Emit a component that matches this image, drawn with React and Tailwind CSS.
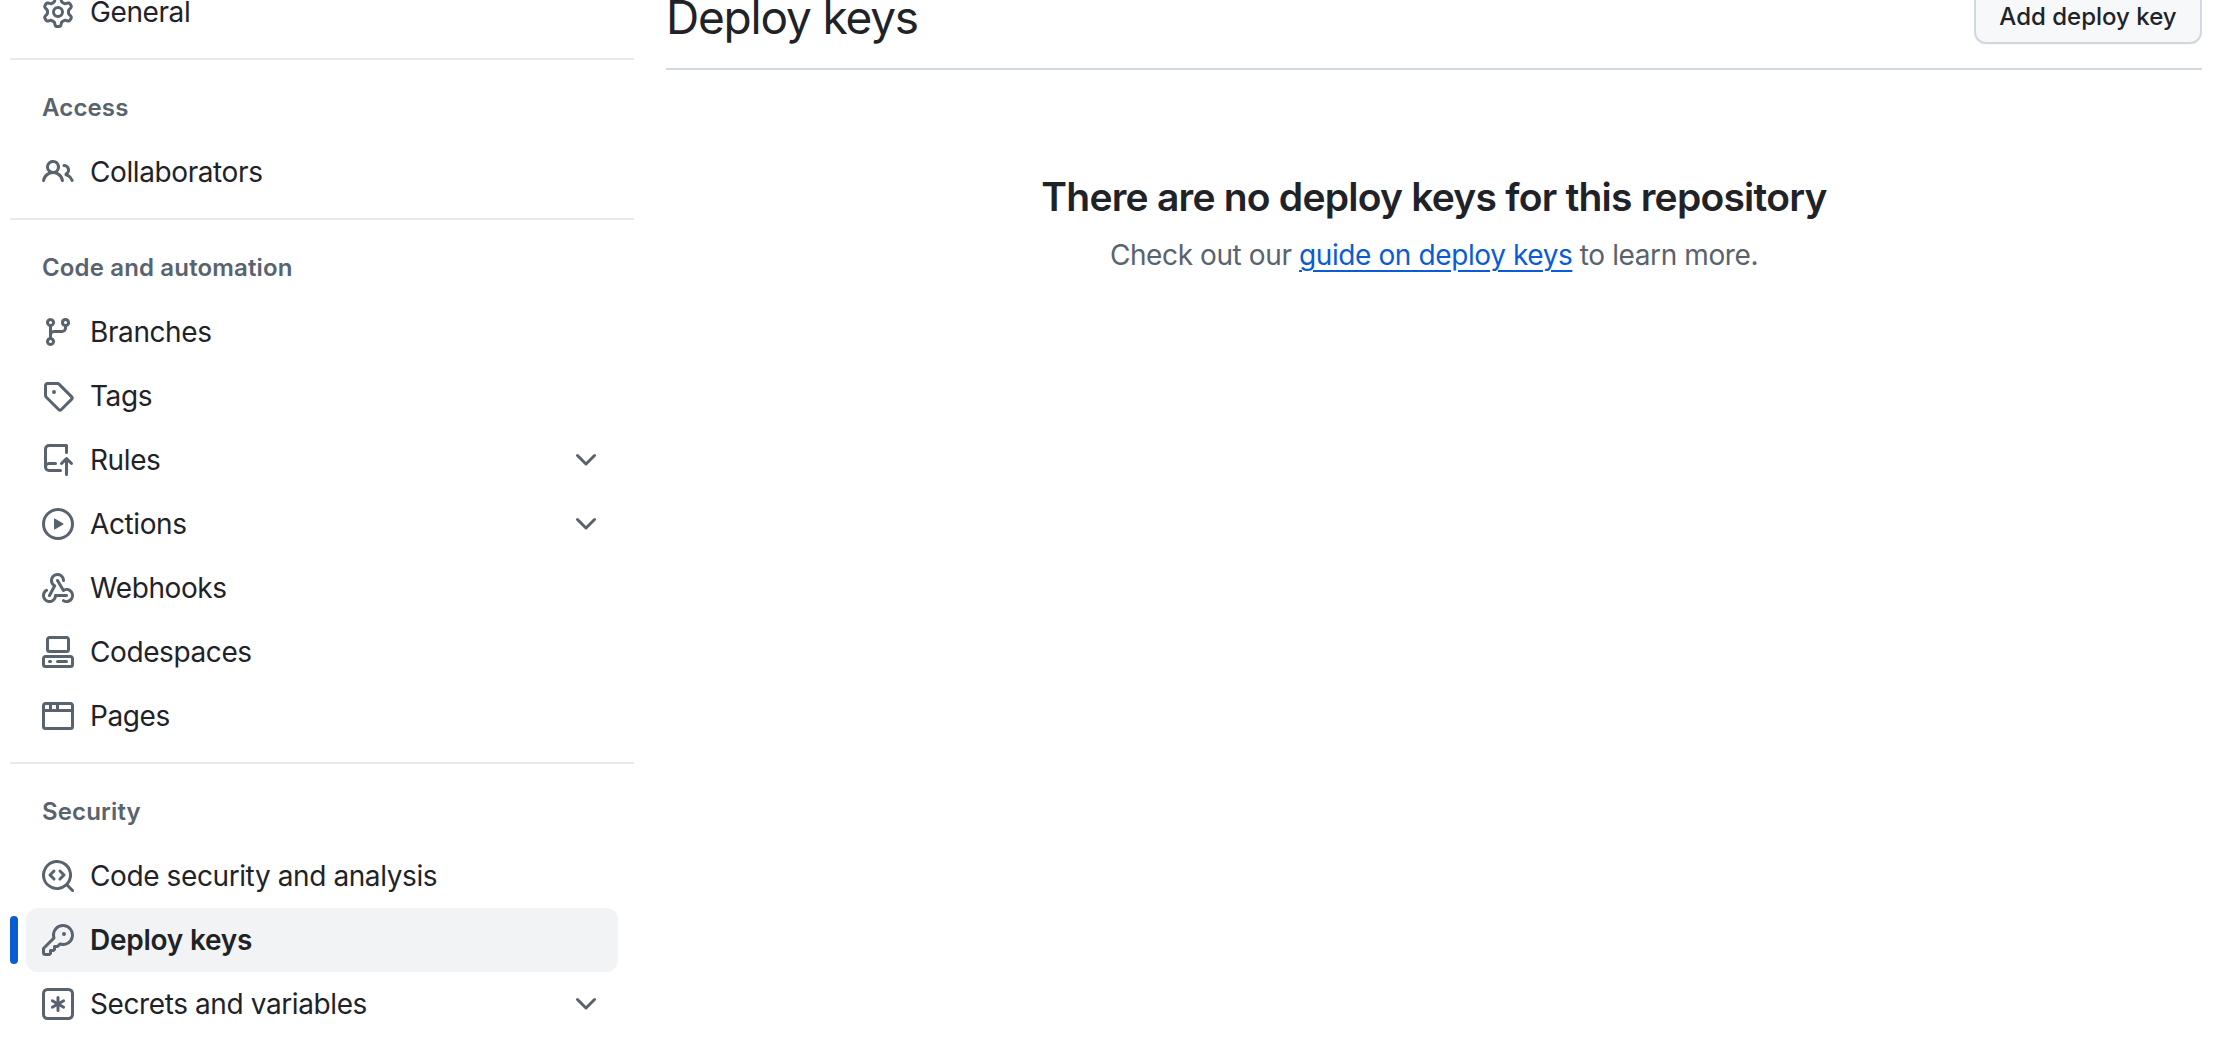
const P = {
  gear: ["M8 0a8.2 8.2 0 0 1 .701.031C9.444.095 9.99.645 10.16 1.29l.288 1.107c.018.066.079.158.212.224.231.114.454.243.668.386.123.082.233.09.299.071l1.103-.303c.644-.176 1.392.021 1.82.63.27.385.506.792.704 1.218.315.675.111 1.422-.364 1.891l-.814.806c-.049.048-.098.147-.088.294.016.257.016.515 0 .772-.01.147.038.246.088.294l.814.806c.475.469.679 1.216.364 1.891a7.977 7.977 0 0 1-.704 1.217c-.428.61-1.176.807-1.82.63l-1.102-.302c-.067-.019-.177-.011-.3.071a5.909 5.909 0 0 1-.668.386c-.133.066-.194.158-.211.224l-.29 1.106c-.168.646-.715 1.196-1.458 1.26a8.006 8.006 0 0 1-1.402 0c-.743-.064-1.289-.614-1.458-1.26l-.289-1.106c-.018-.066-.079-.158-.212-.224a5.738 5.738 0 0 1-.668-.386c-.123-.082-.233-.09-.299-.071l-1.103.303c-.644.176-1.392-.021-1.82-.63a8.12 8.12 0 0 1-.704-1.218c-.315-.675-.111-1.422.363-1.891l.815-.806c.05-.048.098-.147.088-.294a6.214 6.214 0 0 1 0-.772c.01-.147-.038-.246-.088-.294l-.815-.806C.635 6.045.431 5.298.746 4.623a7.92 7.92 0 0 1 .704-1.217c.428-.61 1.176-.807 1.82-.63l1.102.302c.067.019.177.011.3-.071.214-.143.437-.272.668-.386.133-.066.194-.158.211-.224l.29-1.106C6.009.645 6.556.095 7.299.03 7.53.01 7.764 0 8 0Zm-.571 1.525c-.036.003-.108.036-.137.146l-.289 1.105c-.147.561-.549.967-.998 1.189-.173.086-.34.183-.5.29-.417.278-.97.423-1.529.27l-1.103-.303c-.109-.03-.175.016-.195.045-.22.312-.412.644-.573.99-.014.031-.021.11.059.19l.815.806c.411.406.562.957.53 1.456a4.709 4.709 0 0 0 0 .582c.032.499-.119 1.05-.53 1.456l-.815.806c-.081.08-.073.159-.059.19.162.346.353.677.573.989.02.03.085.076.195.046l1.102-.303c.56-.153 1.113-.008 1.53.27.161.107.328.204.501.29.447.222.85.629.997 1.189l.289 1.105c.029.109.101.143.137.146a6.6 6.6 0 0 0 1.142 0c.036-.003.108-.036.137-.146l.289-1.105c.147-.561.549-.967.998-1.189.173-.086.34-.183.5-.29.417-.278.97-.423 1.529-.27l1.103.303c.109.029.175-.016.195-.045.22-.313.411-.644.573-.99.014-.031.021-.11-.059-.19l-.815-.806c-.411-.406-.562-.957-.53-1.456a4.709 4.709 0 0 0 0-.582c-.032-.499.119-1.05.53-1.456l.815-.806c.081-.08.073-.159.059-.19a6.464 6.464 0 0 0-.573-.989c-.02-.03-.085-.076-.195-.046l-1.102.303c-.56.153-1.113.008-1.53-.27a4.44 4.44 0 0 0-.501-.29c-.447-.222-.85-.629-.997-1.189l-.289-1.105c-.029-.11-.101-.143-.137-.146a6.6 6.6 0 0 0-1.142 0ZM11 8a3 3 0 1 1-6 0 3 3 0 0 1 6 0ZM9.5 8a1.5 1.5 0 1 0-3.001.001A1.5 1.5 0 0 0 9.5 8Z"],
  people: ["M2 5.5a3.5 3.5 0 1 1 5.898 2.549 5.508 5.508 0 0 1 3.034 4.084.75.75 0 1 1-1.482.235 4 4 0 0 0-7.9 0 .75.75 0 0 1-1.482-.236A5.507 5.507 0 0 1 3.102 8.05 3.493 3.493 0 0 1 2 5.5ZM11 4a3.001 3.001 0 0 1 2.22 5.018 5.01 5.01 0 0 1 2.56 3.012.749.749 0 0 1-.885.954.752.752 0 0 1-.549-.514 3.507 3.507 0 0 0-2.522-2.372.75.75 0 0 1-.574-.73v-.352a.75.75 0 0 1 .416-.672A1.5 1.5 0 0 0 11 5.5.75.75 0 0 1 11 4Zm-5.5-.5a2 2 0 1 0-.001 3.999A2 2 0 0 0 5.5 3.5Z"],
  branch: ["M9.5 3.25a2.25 2.25 0 1 1 3 2.122V6A2.5 2.5 0 0 1 10 8.5H6a1 1 0 0 0-1 1v1.128a2.251 2.251 0 1 1-1.5 0V5.372a2.25 2.25 0 1 1 1.5 0v1.836A2.493 2.493 0 0 1 6 7h4a1 1 0 0 0 1-1v-.628A2.25 2.25 0 0 1 9.5 3.25Zm-6 0a.75.75 0 1 0 1.5 0 .75.75 0 0 0-1.5 0Zm8.25-.75a.75.75 0 1 0 0 1.5.75.75 0 0 0 0-1.5ZM4.25 12a.75.75 0 1 0 0 1.5.75.75 0 0 0 0-1.5Z"],
  tag: ["M1 7.775V2.75C1 1.784 1.784 1 2.75 1h5.025c.464 0 .91.184 1.238.513l6.25 6.25a1.75 1.75 0 0 1 0 2.474l-5.026 5.026a1.75 1.75 0 0 1-2.474 0l-6.25-6.25A1.75 1.75 0 0 1 1 7.775Zm1.5 0c0 .066.026.13.073.177l6.25 6.25a.25.25 0 0 0 .354 0l5.025-5.025a.25.25 0 0 0 0-.354l-6.25-6.25a.25.25 0 0 0-.177-.073H2.75a.25.25 0 0 0-.25.25ZM6 5a1 1 0 1 1 0 2 1 1 0 0 1 0-2Z"],
  push: ["M1 2.5A2.5 2.5 0 0 1 3.5 0h8.75a.75.75 0 0 1 .75.75v3.5a.75.75 0 0 1-1.5 0V1.5h-8a1 1 0 0 0-1 1v6.708A2.492 2.492 0 0 1 3.5 9h3.25a.75.75 0 0 1 0 1.5H3.5a1 1 0 0 0 0 2h5.75a.75.75 0 0 1 0 1.5H3.5A2.5 2.5 0 0 1 1 11.5Zm13.23 7.79h-.001l-1.224-1.224v6.184a.75.75 0 0 1-1.5 0V9.066L10.28 10.29a.75.75 0 0 1-1.06-1.061l2.505-2.504a.75.75 0 0 1 1.06 0L15.29 9.23a.751.751 0 0 1-.018 1.042.751.751 0 0 1-1.042.018Z"],
  play: ["M8 0a8 8 0 1 1 0 16A8 8 0 0 1 8 0ZM1.5 8a6.5 6.5 0 1 0 13 0 6.5 6.5 0 0 0-13 0Zm4.879-2.773 4.264 2.559a.25.25 0 0 1 0 .428l-4.264 2.559A.25.25 0 0 1 6 10.559V5.442a.25.25 0 0 1 .379-.215Z"],
  webhook: ["M5.5 4.25a2.25 2.25 0 0 1 4.5 0 .75.75 0 0 0 1.5 0 3.75 3.75 0 1 0-6.14 2.889l-2.272 4.258a.75.75 0 0 0 1.324.706L7 7.25a.75.75 0 0 0-.309-1.015A2.25 2.25 0 0 1 5.5 4.25Z", "M7.364 3.607a.75.75 0 0 1 1.03.257l2.608 4.349a3.75 3.75 0 1 1-.628 6.785.75.75 0 0 1 .752-1.299 2.25 2.25 0 1 0-.033-3.88.75.75 0 0 1-1.03-.256L7.107 4.636a.75.75 0 0 1 .257-1.03Z", "M2.9 8.776A.75.75 0 0 1 2.625 9.8 2.25 2.25 0 1 0 6 11.75a.75.75 0 0 1 .75-.751h5.5a.75.75 0 0 1 0 1.5H7.425a3.751 3.751 0 1 1-5.55-3.998.75.75 0 0 1 1.024.274Z"],
  codespaces: ["M0 11.25c0-.966.784-1.75 1.75-1.75h12.5c.966 0 1.75.784 1.75 1.75v3A1.75 1.75 0 0 1 14.25 16H1.75A1.75 1.75 0 0 1 0 14.25Zm2-9.5C2 .784 2.784 0 3.75 0h8.5C13.216 0 14 .784 14 1.75v5a1.75 1.75 0 0 1-1.75 1.75h-8.5A1.75 1.75 0 0 1 2 6.75Zm1.75-.25a.25.25 0 0 0-.25.25v5c0 .138.112.25.25.25h8.5a.25.25 0 0 0 .25-.25v-5a.25.25 0 0 0-.25-.25Zm-2 9.5a.25.25 0 0 0-.25.25v3c0 .138.112.25.25.25h12.5a.25.25 0 0 0 .25-.25v-3a.25.25 0 0 0-.25-.25Z", "M7 12.75a.75.75 0 0 1 .75-.75h4.5a.75.75 0 0 1 0 1.5h-4.5a.75.75 0 0 1-.75-.75Zm-4 0a.75.75 0 0 1 .75-.75h.5a.75.75 0 0 1 0 1.5h-.5a.75.75 0 0 1-.75-.75Z"],
  browser: ["M0 2.75C0 1.784.784 1 1.75 1h12.5c.966 0 1.75.784 1.75 1.75v10.5A1.75 1.75 0 0 1 14.25 15H1.75A1.75 1.75 0 0 1 0 13.25ZM14.5 6h-13v7.25c0 .138.112.25.25.25h12.5a.25.25 0 0 0 .25-.25Zm-6-3.5v2h6v-1.75a.25.25 0 0 0-.25-.25ZM5 2.5v2h2v-2Zm-3.25 0a.25.25 0 0 0-.25.25V4.5h2v-2Z"],
  codescan: ["M8.47 4.97a.75.75 0 0 0 0 1.06L9.94 7.5 8.47 8.97a.75.75 0 1 0 1.06 1.06l2-2a.75.75 0 0 0 0-1.06l-2-2a.75.75 0 0 0-1.06 0ZM6.53 6.03a.75.75 0 0 0-1.06-1.06l-2 2a.75.75 0 0 0 0 1.06l2 2a.75.75 0 1 0 1.06-1.06L5.06 7.5l1.47-1.47Z", "M12.246 13.307a7.501 7.501 0 1 1 1.06-1.06l2.474 2.473a.749.749 0 0 1-.326 1.275.749.749 0 0 1-.734-.215ZM1.5 7.5a6.002 6.002 0 0 0 3.608 5.504 6.002 6.002 0 0 0 6.486-1.117.748.748 0 0 1 .292-.293A6 6 0 1 0 1.5 7.5Z"],
  key: ["M10.5 0a5.499 5.499 0 1 1-1.288 10.848l-.932.932a.749.749 0 0 1-.53.22H7v.75a.749.749 0 0 1-.22.53l-.5.5a.749.749 0 0 1-.53.22H5v.75a.749.749 0 0 1-.22.53l-.5.5a.749.749 0 0 1-.53.22h-2A1.75 1.75 0 0 1 0 14.25v-2c0-.199.079-.389.22-.53l4.932-4.932A5.5 5.5 0 0 1 10.5 0Zm-4 5.5c-.001.431.069.86.205 1.269a.75.75 0 0 1-.181.768L1.5 12.56v1.69c0 .138.112.25.25.25h1.69l.06-.06v-1.19a.75.75 0 0 1 .75-.75h1.19l.06-.06v-1.19a.75.75 0 0 1 .75-.75h1.19l1.023-1.025a.75.75 0 0 1 .768-.18A4 4 0 1 0 6.5 5.5ZM11 6a1 1 0 1 1 0-2 1 1 0 0 1 0 2Z"],
  asterisk: ["M0 2.75A2.75 2.75 0 0 1 2.75 0h10.5A2.75 2.75 0 0 1 16 2.75v10.5A2.75 2.75 0 0 1 13.25 16H2.75A2.75 2.75 0 0 1 0 13.25ZM2.75 1.5c-.69 0-1.25.56-1.25 1.25v10.5c0 .69.56 1.25 1.25 1.25h10.5c.69 0 1.25-.56 1.25-1.25V2.75c0-.69-.56-1.25-1.25-1.25Z", "M8 4a.75.75 0 0 1 .75.75V6.7l1.69-.975a.75.75 0 0 1 .75 1.3L9.5 8l1.69.976a.75.75 0 0 1-.75 1.298L8.75 9.3v1.951a.75.75 0 0 1-1.5 0V9.299l-1.69.976a.75.75 0 0 1-.75-1.3L6.5 8l-1.69-.975a.75.75 0 0 1 .75-1.3l1.69.976V4.75A.75.75 0 0 1 8 4Z"],
  chevron: ["M12.78 5.22a.749.749 0 0 1 0 1.06l-4.25 4.25a.749.749 0 0 1-1.06 0L3.22 6.28a.749.749 0 1 1 1.06-1.06L8 8.939l3.72-3.719a.749.749 0 0 1 1.06 0Z"],
};

function Icon({ name }) {
  return (
    <svg viewBox="0 0 16 16" fill="#59636e" className="w-8 h-8 shrink-0">
      {P[name].map((d) => (
        <path key={d} d={d} />
      ))}
    </svg>
  );
}

function Row({ icon, label, chevron, active }) {
  return (
    <div className="relative h-16">
      {active && <div className="absolute left-0 top-2 w-2 h-12 rounded-md bg-[#0a5cd5]" />}
      <div
        className={`ml-4 mr-4 h-16 rounded-xl flex items-center pl-4 pr-4 gap-4 ${
          active ? "bg-[#f2f3f5]" : ""
        }`}
      >
        <Icon name={icon} />
        <span
          className={`flex-1 text-[28px] leading-10 text-[#1f2328] whitespace-nowrap ${
            active ? "font-semibold tracking-[-0.25px]" : "tracking-[-0.4px]"
          }`}
        >
          {label}
        </span>
        {chevron && <Icon name="chevron" />}
      </div>
    </div>
  );
}

function Divider() {
  return <div className="h-0.5 bg-[#e6eaef] mt-[14px]" />;
}

function Heading({ children }) {
  return (
    <div className="h-10 mt-7 mb-3 pl-8 text-[24px] leading-10 font-semibold tracking-[0.15px] text-[#59636e]">
      {children}
    </div>
  );
}

export default function App() {
  return (
    <div className="h-screen overflow-hidden bg-white flex font-['Inter','Liberation_Sans',sans-serif]">
      <aside className="w-[624px] ml-2.5 shrink-0 -mt-5">
        <Row icon="gear" label="General" />
        <Divider />
        <Heading>Access</Heading>
        <Row icon="people" label="Collaborators" />
        <Divider />
        <Heading>Code and automation</Heading>
        <Row icon="branch" label="Branches" />
        <Row icon="tag" label="Tags" />
        <Row icon="push" label="Rules" chevron />
        <Row icon="play" label="Actions" chevron />
        <Row icon="webhook" label="Webhooks" />
        <Row icon="codespaces" label="Codespaces" />
        <Row icon="browser" label="Pages" />
        <Divider />
        <Heading>Security</Heading>
        <Row icon="codescan" label="Code security and analysis" />
        <Row icon="key" label="Deploy keys" active />
        <Row icon="asterisk" label="Secrets and variables" chevron />
      </aside>
      <main className="flex-1 ml-8 mr-7 min-w-0">
        <div className="-mt-[21px] h-[91px] flex items-start justify-between border-b-2 border-[#d1d9e0]">
          <h1 className="mt-2 text-[46px] leading-[60px] font-normal tracking-[-1.2px] text-[#1f2328] whitespace-nowrap">
            Deploy keys
          </h1>
          <button className="mt-[9px] w-[228px] h-14 pt-0.5 rounded-xl bg-[#f6f8fa] border-2 border-[#d1d9e0] shadow-[0_1px_0_rgba(31,35,40,0.04)] text-[24px] font-medium text-[#1f2328] whitespace-nowrap">
            Add deploy key
          </button>
        </div>
        <div className="mt-[99px] flex flex-col items-center">
          <h2 className="text-[39px] leading-[56px] font-semibold text-[#1f2328] tracking-[-0.77px] whitespace-nowrap">
            There are no deploy keys for this repository
          </h2>
          <p className="mt-[5px] text-[28px] leading-[50px] text-[#59636e] tracking-[-0.4px] whitespace-nowrap">
            Check out our{" "}
            <a className="text-[#0a5cd5] underline decoration-2 underline-offset-[5px]">guide on deploy keys</a> to learn more.
          </p>
        </div>
      </main>
    </div>
  );
}
